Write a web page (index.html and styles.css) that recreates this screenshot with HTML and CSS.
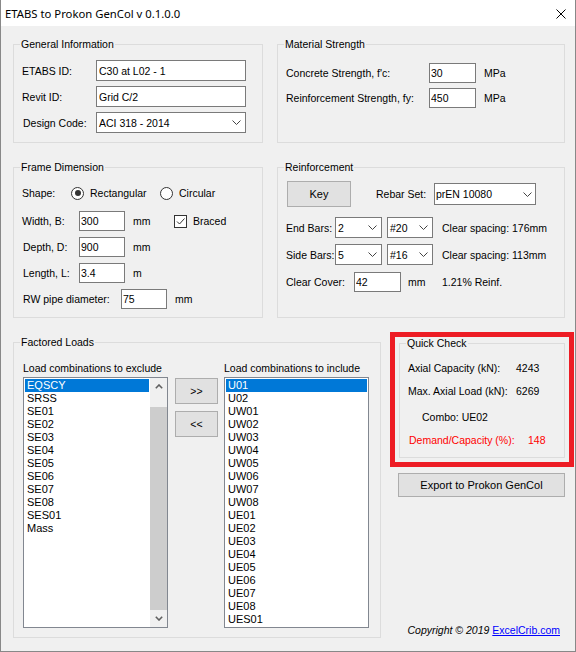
FILE: index.html
```html
<!DOCTYPE html>
<html>
<head>
  <meta charset="utf-8">
  <title>ETABS to Prokon GenCol</title>
  <link rel="stylesheet" href="styles.css">
</head>
<body>
<div class="window">

  <!-- Title bar -->
  <div class="titlebar">
    <span class="title">ETABS to Prokon GenCol v 0.1.0.0</span>
    <svg class="close" width="10" height="10" viewBox="0 0 10 10"><path d="M0.5 0.5 L9.5 9.5 M9.5 0.5 L0.5 9.5"/></svg>
  </div>

  <div class="client">

    <!-- Row 1 -->
    <div class="row row-top">
      <div class="group gen">
        <div class="group-title">General Information</div>
        <div class="gen-fields">
          <div class="field"><label class="lbl-gen">ETABS ID:</label><input class="tb tb-gen" type="text" value="C30 at L02 - 1"></div>
          <div class="field"><label class="lbl-gen">Revit ID:</label><input class="tb tb-gen" type="text" value="Grid C/2"></div>
          <div class="field"><label class="lbl-gen shift">Design Code:</label>
            <div class="combo combo-gen"><span>ACI 318 - 2014</span><svg class="chev" viewBox="0 0 9 5"><polyline points="0.5,0.5 4.5,4.5 8.5,0.5"/></svg></div>
          </div>
        </div>
      </div>

      <div class="group mat">
        <div class="group-title">Material Strength</div>
        <div class="mat-fields">
          <div class="field"><label class="lbl-mat">Concrete Strength, f'c:</label><input class="tb tb-small" type="text" value="30"><span class="unit">MPa</span></div>
          <div class="field"><label class="lbl-mat">Reinforcement Strength, fy:</label><input class="tb tb-small" type="text" value="450"><span class="unit">MPa</span></div>
        </div>
      </div>
    </div>

    <!-- Row 2 -->
    <div class="row row-top">
      <div class="group frame">
        <div class="group-title">Frame Dimension</div>
        <div class="shape-row">
          <span class="lbl-shape">Shape:</span>
          <span class="opt opt-first"><span class="radio on"></span>Rectangular</span>
          <span class="opt"><span class="radio"></span>Circular</span>
        </div>
        <div class="frame-fields">
          <div class="field"><label class="lbl-dim">Width, B:</label><input class="tb tb-small" type="text" value="300"><span class="unit unit-gap">mm</span>
            <span class="check"><svg viewBox="0 0 11 11"><polyline points="2,5.5 4.5,8 9.5,2.5"/></svg></span><span>Braced</span>
          </div>
          <div class="field"><label class="lbl-dim shift">Depth, D:</label><input class="tb tb-small" type="text" value="900"><span class="unit">mm</span></div>
          <div class="field"><label class="lbl-dim shift">Length, L:</label><input class="tb tb-small" type="text" value="3.4"><span class="unit">m</span></div>
          <div class="field"><label class="lbl-rw shift">RW pipe diameter:</label><input class="tb tb-small" type="text" value="75"><span class="unit">mm</span></div>
        </div>
      </div>

      <div class="group reinf">
        <div class="group-title">Reinforcement</div>
        <div class="key-row">
          <button class="btn btn-key">Key</button>
          <span class="lbl-rebar">Rebar Set:</span>
          <div class="combo combo-rebar"><span>prEN 10080</span><svg class="chev" viewBox="0 0 9 5"><polyline points="0.5,0.5 4.5,4.5 8.5,0.5"/></svg></div>
        </div>
        <div class="bar-row bar-first">
          <span class="lbl-bars">End Bars:</span>
          <div class="combo combo-num"><span>2</span><svg class="chev" viewBox="0 0 9 5"><polyline points="0.5,0.5 4.5,4.5 8.5,0.5"/></svg></div>
          <div class="combo combo-size"><span>#20</span><svg class="chev" viewBox="0 0 9 5"><polyline points="0.5,0.5 4.5,4.5 8.5,0.5"/></svg></div>
          <span class="spacing">Clear spacing: 176mm</span>
        </div>
        <div class="bar-row">
          <span class="lbl-bars">Side Bars:</span>
          <div class="combo combo-num"><span>5</span><svg class="chev" viewBox="0 0 9 5"><polyline points="0.5,0.5 4.5,4.5 8.5,0.5"/></svg></div>
          <div class="combo combo-size"><span>#16</span><svg class="chev" viewBox="0 0 9 5"><polyline points="0.5,0.5 4.5,4.5 8.5,0.5"/></svg></div>
          <span class="spacing">Clear spacing: 113mm</span>
        </div>
        <div class="field cover-row">
          <label class="lbl-cover">Clear Cover:</label><input class="tb tb-small" type="text" value="42"><span class="unit unit-cover">mm</span><span>1.21% Reinf.</span>
        </div>
      </div>
    </div>

    <!-- Row 3 -->
    <div class="row row-bottom">
      <div class="group loads">
        <div class="group-title">Factored Loads</div>
        <div class="lists">
          <div class="list-col">
            <div class="list-cap">Load combinations to exclude</div>
            <div class="listbox">
              <div class="items">
                <div class="item selected">EQSCY</div>
                <div class="item">SRSS</div>
                <div class="item">SE01</div>
                <div class="item">SE02</div>
                <div class="item">SE03</div>
                <div class="item">SE04</div>
                <div class="item">SE05</div>
                <div class="item">SE06</div>
                <div class="item">SE07</div>
                <div class="item">SE08</div>
                <div class="item">SES01</div>
                <div class="item">Mass</div>
              </div>
              <div class="vscroll">
                <div class="sb-arrow"><svg viewBox="0 0 8 5"><polyline points="0.8,4.2 4,1 7.2,4.2"/></svg></div>
                <div class="sb-track"><div class="sb-thumb"></div></div>
                <div class="sb-arrow"><svg viewBox="0 0 8 5"><polyline points="0.8,0.8 4,4 7.2,0.8"/></svg></div>
              </div>
            </div>
          </div>

          <div class="move-col">
            <button class="btn btn-move">&gt;&gt;</button>
            <button class="btn btn-move">&lt;&lt;</button>
          </div>

          <div class="list-col">
            <div class="list-cap">Load combinations to include</div>
            <div class="listbox">
              <div class="items">
                <div class="item selected">U01</div>
                <div class="item">U02</div>
                <div class="item">UW01</div>
                <div class="item">UW02</div>
                <div class="item">UW03</div>
                <div class="item">UW04</div>
                <div class="item">UW05</div>
                <div class="item">UW06</div>
                <div class="item">UW07</div>
                <div class="item">UW08</div>
                <div class="item">UE01</div>
                <div class="item">UE02</div>
                <div class="item">UE03</div>
                <div class="item">UE04</div>
                <div class="item">UE05</div>
                <div class="item">UE06</div>
                <div class="item">UE07</div>
                <div class="item">UE08</div>
                <div class="item">UES01</div>
              </div>
            </div>
          </div>
        </div>
      </div>

      <div class="side">
        <div class="highlight">
          <div class="group quick">
            <div class="group-title">Quick Check</div>
            <div class="qc-row qc-first"><span class="qc-label">Axial Capacity (kN):</span><span>4243</span></div>
            <div class="qc-row"><span class="qc-label">Max. Axial Load (kN):</span><span>6269</span></div>
            <div class="qc-row qc-combo">Combo: UE02</div>
            <div class="qc-row qc-alert"><span class="qc-label-wide">Demand/Capacity (%):</span><span>148</span></div>
          </div>
        </div>
        <button class="btn btn-export">Export to Prokon GenCol</button>
        <div class="copyright"><em>Copyright © 2019</em> <a href="#">ExcelCrib.com</a></div>
      </div>
    </div>

  </div>
</div>
</body>
</html>
```

FILE: styles.css
```css
* {
  box-sizing: border-box;
  margin: 0;
  padding: 0;
}

body {
  font-family: "Liberation Sans", Arial, sans-serif;
  font-size: 10.5px;
  color: #000;
  background: #f0f0f0;
  width: 576px;
  height: 652px;
  overflow: hidden;
  white-space: nowrap;
}

.window {
  width: 576px;
  height: 652px;
  border: 1px solid #888;
  border-top: none;
  background: #f0f0f0;
  display: flex;
  flex-direction: column;
}

/* Title bar */
.titlebar {
  height: 26px;
  background: #fff;
  display: flex;
  align-items: center;
  justify-content: space-between;
  padding: 0 9px 0 4px;
  font-family: "Noto Sans", sans-serif;
  font-size: 11.3px;
}

.close {
  stroke: #000;
  stroke-width: 1;
  fill: none;
  margin-top: 2px;
}

.client {
  flex: 1;
  padding: 18px 0 0 12px;
}

.row {
  display: flex;
}

.row-top {
  gap: 14px;
  margin-bottom: 24px;
}

/* Group boxes */
.group {
  border: 1px solid #dcdcdc;
  padding: 0 8px;
}

.group-title {
  width: max-content;
  margin: -7px 0 0 -2px;
  padding: 0 1px;
  line-height: 13px;
  background: #f0f0f0;
}

.gen { width: 250px; height: 99px; }
.mat { width: 288px; height: 99px; }
.frame { width: 250px; height: 151px; }
.reinf { width: 288px; height: 151px; }
.loads { width: 368px; height: 296px; }

.field {
  display: flex;
  align-items: center;
}

.shift { padding-left: 1px; }

/* Text boxes and combos */
.tb {
  font: inherit;
  color: #000;
  background: #fff;
  border: 1px solid #7a7a7a;
  padding: 0 1px;
  outline: none;
}

.tb-gen {
  width: 150px;
  height: 21px;
  padding: 0 2px;
}

.tb-small {
  width: 46px;
  height: 20px;
}

.combo {
  display: flex;
  align-items: center;
  justify-content: space-between;
  background: #fff;
  border: 1px solid #7a7a7a;
  padding: 0 4px 0 2px;
}

.chev {
  width: 9px;
  height: 5px;
  fill: none;
  stroke: #444;
  stroke-width: 1;
}

.combo-gen { width: 150px; height: 21px; }
.combo-rebar { width: 102px; height: 22px; padding-left: 1px; padding-right: 3px; }
.combo-num { width: 47px; height: 21px; }
.combo-size { width: 46px; height: 21px; margin-left: 5px; }

.unit { margin-left: 8px; }

/* General information */
.gen-fields {
  display: flex;
  flex-direction: column;
  gap: 5px;
  padding-top: 9px;
}

.lbl-gen { width: 74px; }

/* Material strength */
.mat-fields {
  display: flex;
  flex-direction: column;
  gap: 5px;
  padding-top: 12px;
}

.mat .tb-small { width: 47px; }
.lbl-mat { width: 143px; }

/* Frame dimension */
.shape-row {
  display: flex;
  align-items: center;
  height: 20px;
  margin-top: 9px;
}

.lbl-shape { width: 49px; }

.opt {
  display: flex;
  align-items: center;
  gap: 6px;
}

.opt-first { width: 89px; }

.radio {
  width: 13px;
  height: 13px;
  border: 1px solid #333;
  border-radius: 50%;
  background: #fff;
  display: flex;
  align-items: center;
  justify-content: center;
}

.radio.on::after {
  content: "";
  width: 6px;
  height: 6px;
  border-radius: 50%;
  background: #333;
}

.frame-fields {
  display: flex;
  flex-direction: column;
  gap: 6px;
  margin-top: 8px;
}

.lbl-dim { width: 57px; }
.lbl-rw { width: 99px; }

.unit-gap { width: 41px; }

.check {
  width: 13px;
  height: 13px;
  border: 1px solid #333;
  background: #fff;
  margin-right: 6px;
  display: flex;
}

.check svg {
  width: 11px;
  height: 11px;
  fill: none;
  stroke: #333;
  stroke-width: 1;
}

/* Reinforcement */
.key-row {
  display: flex;
  align-items: center;
  margin-top: 7px;
  height: 26px;
}

.btn {
  font: inherit;
  color: #000;
  background: #e1e1e1;
  border: 1px solid #adadad;
}

.btn-key {
  width: 64px;
  height: 26px;
  margin-left: 1px;
  font-size: 11px;
}

.lbl-rebar {
  width: 58px;
  margin-left: 25px;
}

.bar-row {
  display: flex;
  align-items: center;
  height: 21px;
  margin-top: 6px;
}

.bar-first { margin-top: 10px; }

.lbl-bars { width: 49px; }

.spacing { margin-left: 9px; }

.cover-row { margin-top: 7px; }
.cover-row .tb-small { width: 47px; }
.lbl-cover { width: 68px; }
.unit-cover { width: 34px; margin-left: 7px; }

/* Factored loads */
.row-bottom {
  height: 296px;
}

.lists {
  display: flex;
  padding: 13px 0 0 1px;
}

.list-col { width: 145px; }

.list-cap {
  line-height: 13px;
  margin-bottom: 2px;
}

.listbox {
  height: 251px;
  border: 1px solid #828790;
  background: #fff;
  display: flex;
}

.items {
  flex: 1;
  padding: 1px;
}

.item {
  height: 13px;
  line-height: 13px;
  padding-left: 2px;
  font-size: 11px;
}

.item.selected {
  background: #0078d7;
  color: #fff;
}

.vscroll {
  width: 17px;
  background: #f0f0f0;
  display: flex;
  flex-direction: column;
}

.sb-arrow {
  height: 17px;
  display: flex;
  align-items: center;
  justify-content: center;
}

.sb-arrow svg {
  width: 8px;
  height: 5px;
  fill: none;
  stroke: #606060;
  stroke-width: 1.6;
}

.sb-track {
  flex: 1;
  display: flex;
  flex-direction: column;
  padding-top: 12px;
}

.sb-thumb {
  flex: 1;
  background: #cdcdcd;
}

.move-col {
  width: 43px;
  margin: 16px 6px 0 7px;
  display: flex;
  flex-direction: column;
  gap: 7px;
}

.btn-move {
  width: 43px;
  height: 26px;
}

/* Quick check and export */
.side {
  width: 184px;
  margin: -10px 0 0 9px;
  display: flex;
  flex-direction: column;
}

.highlight {
  border: 5px solid #ed1c24;
  padding: 0 4px 4px;
}

.quick {
  height: 115px;
  margin-top: 6px;
}

.qc-row {
  display: flex;
  line-height: 13px;
  margin-top: 10px;
}

.qc-first { margin-top: 12px; }

.qc-label { width: 108px; }

.qc-combo {
  margin-top: 13px;
  padding-left: 14px;
}

.qc-alert {
  color: #ff0000;
  padding-left: 1px;
}

.qc-label-wide { width: 119px; }

.btn-export {
  width: 167px;
  height: 24px;
  margin: 6px 0 0 8px;
  font-size: 11px;
}

.copyright {
  margin-top: auto;
  line-height: 13px;
  text-align: right;
  padding-right: 14px;
  padding-bottom: 1px;
}

.copyright a {
  color: #0000ff;
}
```
